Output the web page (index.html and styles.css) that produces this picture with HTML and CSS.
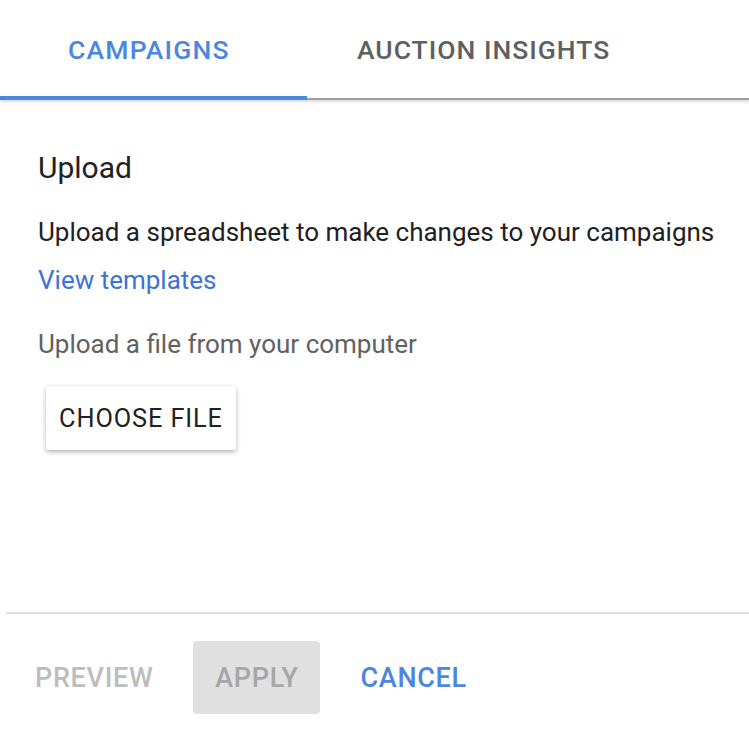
FILE: index.html
```html
<!DOCTYPE html>
<html>
<head>
<meta charset="utf-8">
<link rel="stylesheet" href="styles.css">
</head>
<body>
<div class="tabs">
  <div class="tab active">CAMPAIGNS</div>
  <div class="tab">AUCTION INSIGHTS</div>
</div>
<div class="content">
  <div class="title">Upload</div>
  <div class="desc">Upload a spreadsheet to make changes to your campaigns</div>
  <a class="link">View templates</a>
  <div class="sub">Upload a file from your computer</div>
  <button class="choose">CHOOSE FILE</button>
</div>
<div class="footer">
  <button class="btn flat disabled">PREVIEW</button>
  <button class="btn filled-disabled">APPLY</button>
  <button class="btn flat primary">CANCEL</button>
</div>
</body>
</html>
```
FILE: styles.css
```css
* { box-sizing: border-box; }
html, body { margin: 0; padding: 0; background: #fff; }
body {
  font-family: Roboto, "Noto Sans", Arial, sans-serif;
  width: 749px;
  height: 734px;
  overflow: hidden;
  display: flex;
  flex-direction: column;
}
.tabs {
  display: flex;
  height: 100px;
  border-bottom: 2px solid #9e9e9e;
  box-shadow: 0 2px 3px rgba(0,0,0,0.15);
}
.tab {
  font-size: 26.5px;
  font-weight: 500;
  letter-spacing: 1px;
  color: #5f5f5f;
  display: flex;
  align-items: center;
  padding-top: 1px;
  height: 100%;
  white-space: nowrap;
}
.tab.active {
  width: 307px;
  padding-left: 68px;
  letter-spacing: 1.2px;
  color: #4a87e0;
  border-bottom: 4px solid #4a87e0;
  margin-bottom: -2px;
  height: calc(100% + 2px);
  padding-top: 3px;
}
.tab:not(.active) { padding-left: 50px; }
.content {
  padding: 48px 0 0 38px;
  flex: 1;
  display: flex;
  flex-direction: column;
  align-items: flex-start;
  white-space: nowrap;
}
.title { font-size: 30px; color: #212121; line-height: 40px; }
.desc { font-size: 26px; color: #212121; margin-top: 28px; line-height: 32px; }
.link { font-size: 26px; color: #3b74d6; margin-top: 16px; line-height: 32px; }
.sub { font-size: 26px; color: #616161; margin-top: 32px; line-height: 32px; }
.choose {
  margin-top: 26px;
  margin-left: 8px;
  width: 190px;
  height: 64px;
  border: none;
  border-radius: 3px;
  background: #fff;
  box-shadow: 0 2px 5px rgba(0,0,0,0.3);
  font-family: inherit;
  font-size: 25.3px;
  font-weight: 400;
  letter-spacing: 0.9px;
  color: #212121;
  padding: 0;
}
.footer {
  margin-left: 6px;
  border-top: 2px solid #e0e0e0;
  height: 122px;
  display: flex;
  align-items: center;
  padding: 7px 0 0 12px;
}
.btn {
  border: none;
  background: none;
  font-family: inherit;
  font-size: 27px;
  font-weight: 500;
  letter-spacing: 0.7px;
  height: 73px;
  border-radius: 4px;
  padding: 0 17px;
}
.btn.disabled { color: #bdbdbd; margin-right: 23px; }
.btn.filled-disabled { background: #e0e0e0; color: #a6a6a6; width: 127px; margin-right: 23px; padding: 0; }
.btn.primary { color: #4a87e0; }
```
